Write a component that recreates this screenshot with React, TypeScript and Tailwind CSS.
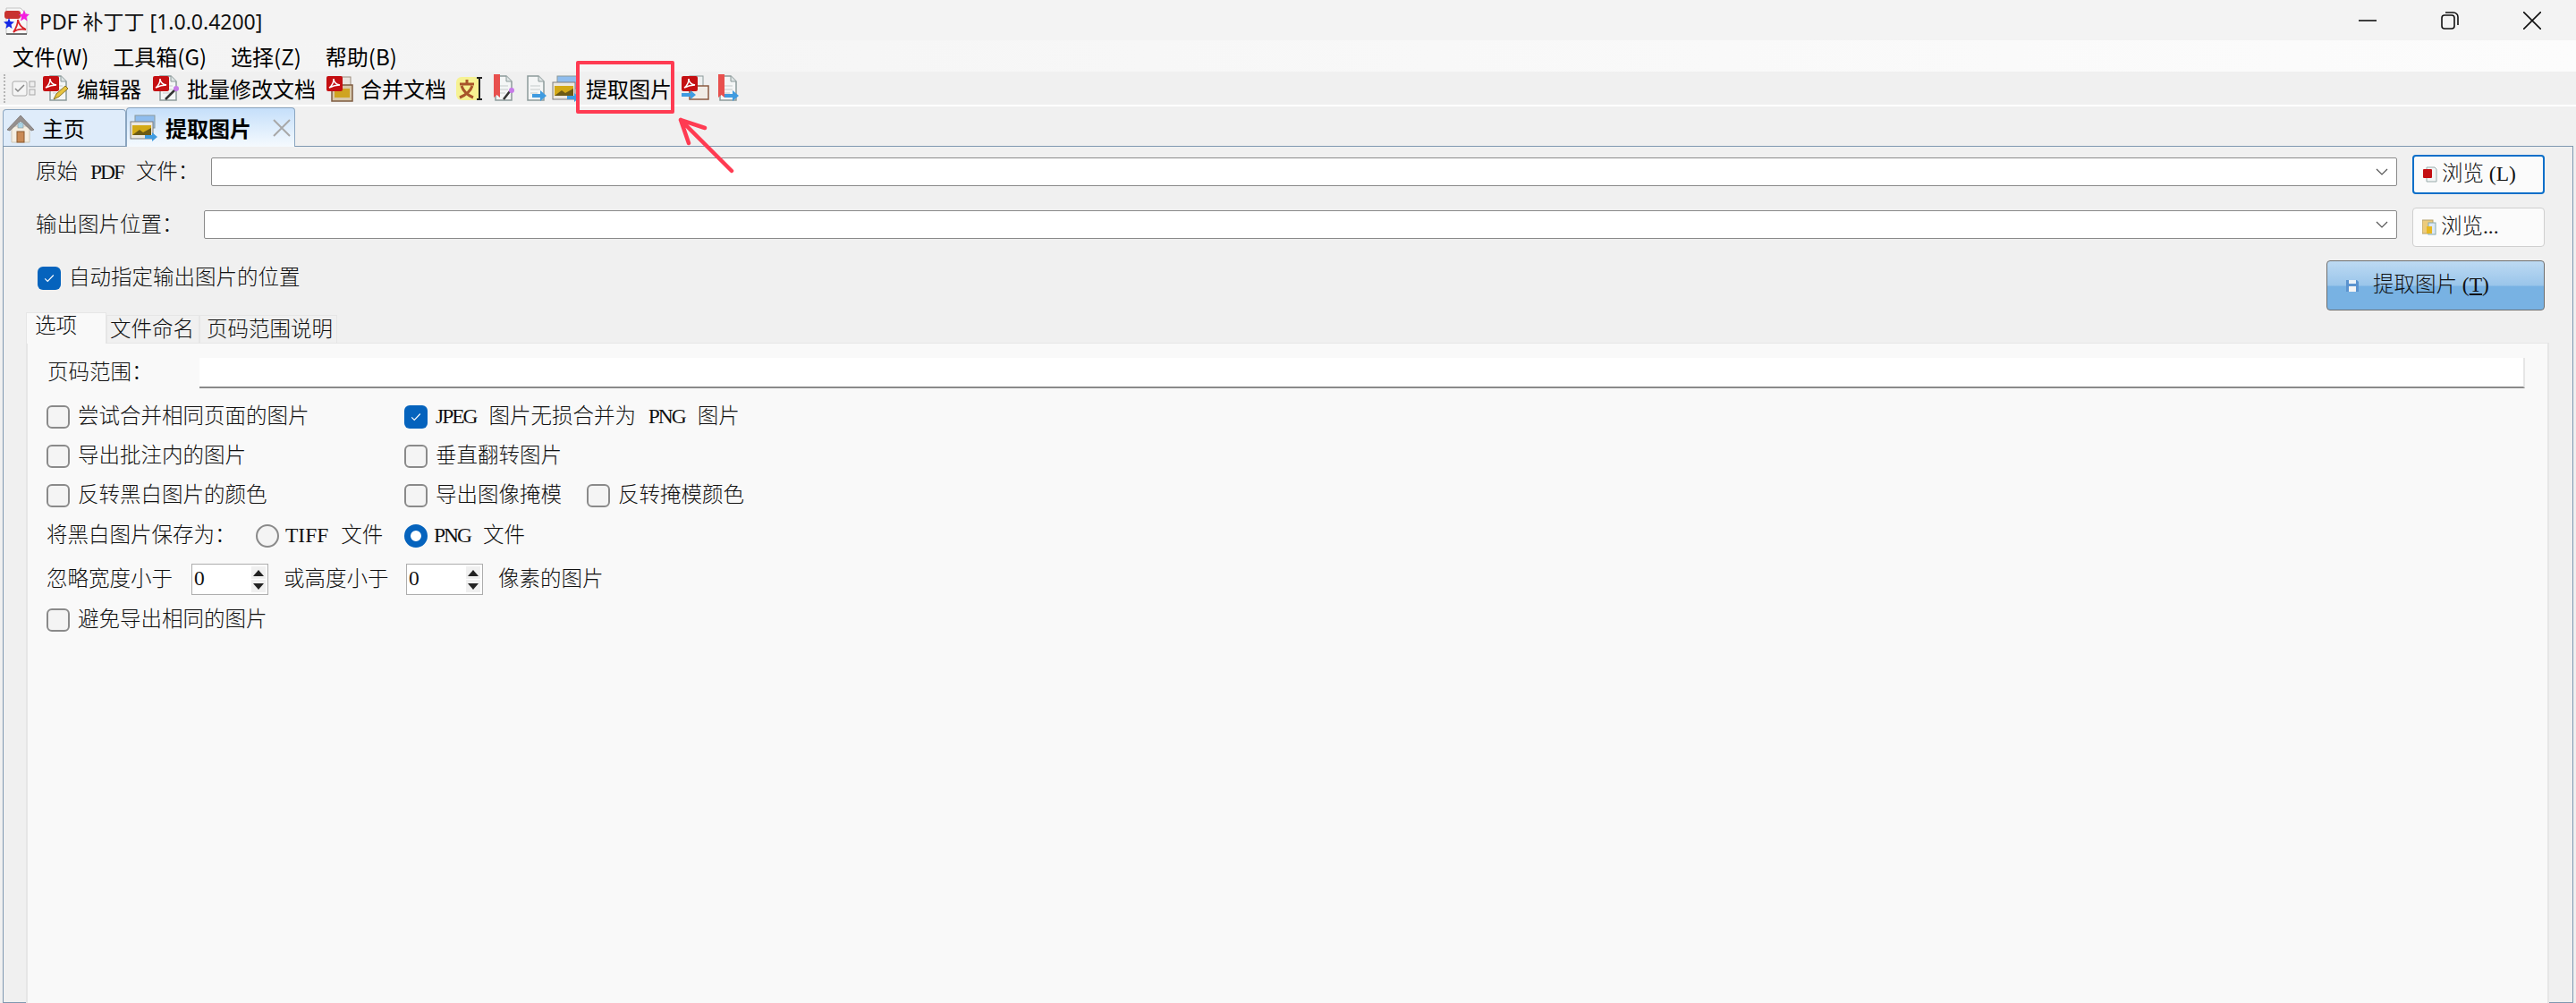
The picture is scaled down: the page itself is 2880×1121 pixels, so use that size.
import type { ReactNode } from "react";

const serif = "font-['Liberation_Serif','Noto_Sans_CJK_SC',serif] font-light [word-spacing:8px]";

function Latin({ children }: { children: ReactNode }) {
  return <span className="tracking-[-2px]">{children}</span>;
}

function DocBase({ children }: { children?: ReactNode }) {
  return (
    <>
      <path d="M9 3h12l6 6v21H9z" fill="#f4f6f6" stroke="#8c9a9a" strokeWidth="1.5" />
      <path d="M21 3v6h6" fill="#dfe5e5" stroke="#8c9a9a" strokeWidth="1" />
      <path d="M12 14h11M12 18h11M12 22h8" stroke="#c5cccc" strokeWidth="1" />
      {children}
    </>
  );
}

function AcrobatBadge() {
  return (
    <>
      <rect x="1" y="3" width="18" height="17" rx="2" fill="#c40f12" />
      <path d="M4 16c3-2 5-6 5-10 0 4 2 6 7 7-5 0-8 1-12 3z" fill="none" stroke="#fff" strokeWidth="1.5" />
    </>
  );
}

function Arrow() {
  return <path d="M14 26h9v-4l7 6-7 6v-4h-9z" transform="translate(0 -3)" fill="#3f9be0" />;
}

function ToolIcon({ kind }: { kind: string }) {
  return (
    <svg viewBox="0 0 32 34" className="w-[32px] h-[34px] shrink-0">
      {kind === "edit" && (
        <DocBase>
          <AcrobatBadge />
          <path d="M13 29l3-6 10-9 3 3-10 9z" fill="#e8c440" stroke="#8d7420" strokeWidth="1" />
        </DocBase>
      )}
      {kind === "batch" && (
        <DocBase>
          <AcrobatBadge />
          <path d="M15 29l11-11" stroke="#333" strokeWidth="2.5" />
          <circle cx="27" cy="17" r="3" fill="#c77be8" />
        </DocBase>
      )}
      {kind === "merge" && (
        <>
          <rect x="11" y="4" width="17" height="15" fill="#e9e5df" stroke="#9a8a7a" />
          <rect x="7" y="13" width="23" height="18" fill="#d8c8a8" stroke="#7d5b40" strokeWidth="1.5" />
          <rect x="10" y="17" width="17" height="10" fill="#cfa420" />
          <AcrobatBadge />
        </>
      )}
      {kind === "text" && (
        <>
          <rect x="1" y="4" width="27" height="26" rx="6" fill="#f7f27a" opacity="0.8" />
          <path d="M5 12h16M13 7v5M7 14c2 6 6 10 13 13M19 14c-2 6-7 10-14 13" fill="none" stroke="#a8552a" strokeWidth="3" />
          <path d="M24 5h6M27 5v24M24 29h6" fill="none" stroke="#222" strokeWidth="2" />
        </>
      )}
      {kind === "mark" && (
        <DocBase>
          <path d="M7 1h7v26l-3.500-3-3.500 3z" fill="#e8504e" />
          <path d="M18 29l7-9" stroke="#333" strokeWidth="2.500" />
          <circle cx="27" cy="19" r="3" fill="#c77be8" />
        </DocBase>
      )}
      {kind === "docout" && (
        <DocBase>
          <Arrow />
        </DocBase>
      )}
      {kind === "image" && <ImageGlyph />}
      {kind === "pdfimg" && (
        <>
          <rect x="10" y="3" width="15" height="18" fill="#eef1f1" stroke="#8c9a9a" />
          <rect x="10" y="14" width="21" height="15" fill="#f1ece6" stroke="#8a5a40" strokeWidth="1.500" />
          <AcrobatBadge />
          <path d="M1 22h10v-3l6 5-6 5v-3H1z" fill="#3f9be0" />
        </>
      )}
      {kind === "markout" && (
        <DocBase>
          <path d="M7 1h7v26l-3.500-3-3.500 3z" fill="#e8504e" />
          <Arrow />
        </DocBase>
      )}
    </svg>
  );
}

function ImageGlyph() {
  return (
    <>
      <rect x="6" y="3" width="22" height="14" fill="#8fbdee" stroke="#8c9a9a" />
      <rect x="1" y="10" width="25" height="19" fill="#ece8e0" stroke="#7c7c7c" />
      <rect x="3" y="14" width="21" height="11" fill="#d3a916" />
      <path d="M3 25l8-6 4 3 9-5v8z" fill="#6c5a14" />
      <path d="M17 25h8v-3l6 5-6 5v-3h-8z" fill="#3f9be0" />
    </>
  );
}

function AppIcon() {
  return (
    <svg viewBox="0 0 34 34" className="w-[34px] h-[34px] shrink-0">
      <path d="M4 2h16l7 7v22H4z" fill="#f7f7f7" stroke="#c4c4c4" />
      <path d="M4 31h23" stroke="#222" strokeWidth="1.200" />
      <rect x="2" y="5" width="18" height="9" rx="3" fill="#c8322f" />
      <path d="M17 15c0 6-3 11-5 14 3-3 7-4 14-3-5-2-8-6-9-11z" fill="none" stroke="#d8242a" strokeWidth="1.800" />
      <path d="M24 4l1.500 4.500 4.500.5-3.500 3 1 4.500-3.500-2.500-4 2.500 1-4.500L18 9l4.500-.5z" fill="#f41de0" />
      <path d="M7 13l1.500 4 4.500.5-3.500 3 1 4.500-3.500-2.500L3.500 25l1-4.500L1 17.500l4.500-.5z" fill="#1427e6" />
    </svg>
  );
}

function HomeIcon() {
  return (
    <svg viewBox="0 0 32 34" className="w-[32px] h-[34px] shrink-0">
      <path d="M6 15h20v18H6z" fill="#f5efe3" stroke="#cfc6b5" />
      <path d="M1 19L16 3l15 16-3 1L16 9 4 20z" fill="#96908e" stroke="#7a7471" strokeWidth="0.800" />
      <rect x="13" y="11" width="6" height="6" fill="#a9d4e6" stroke="#8f8f8f" strokeWidth="0.600" />
      <rect x="12" y="21" width="8" height="12" fill="#c98a55" stroke="#8a5a30" />
    </svg>
  );
}

function Check() {
  return (
    <span className="w-[26px] h-[26px] rounded-[6px] bg-[#0563bd] flex items-center justify-center shrink-0">
      <svg viewBox="0 0 16 16" className="w-[14px] h-[14px]">
        <path d="M2.500 8.500l3.500 3.500 7.500-8" fill="none" stroke="#fff" strokeWidth="1.300" />
      </svg>
    </span>
  );
}

function Box() {
  return <span className="w-[26px] h-[26px] rounded-[6px] bg-[#f4f4f4] border-2 border-[#8a8a8a] shrink-0" />;
}

function CheckItem({ label, checked, className }: { label: ReactNode; checked?: boolean; className?: string }) {
  return (
    <div className={`flex items-center gap-[9px] ${className ?? ""}`}>
      {checked ? <Check /> : <Box />}
      <span>{label}</span>
    </div>
  );
}

function Spinner() {
  return (
    <div className="w-[86px] h-[35px] bg-white border border-[#adadad] flex justify-between shrink-0">
      <span className="pl-[2px] leading-[30px]">0</span>
      <div className="w-[16px] mr-[2px] mt-[2px] flex flex-col gap-[1px]">
        <span className="h-[14px] bg-[#f0f0f0] flex items-center justify-center">
          <span className="w-0 h-0 border-x-[6px] border-x-transparent border-b-[7px] border-b-[#222]" />
        </span>
        <span className="h-[14px] bg-[#f0f0f0] flex items-center justify-center">
          <span className="w-0 h-0 border-x-[6px] border-x-transparent border-t-[7px] border-t-[#222]" />
        </span>
      </div>
    </div>
  );
}

function PathCombo({ label, labelWidth, browse, focused, icon, className }: {
  label: ReactNode;
  labelWidth: string;
  browse: string;
  focused?: boolean;
  icon: ReactNode;
  className?: string;
}) {
  return (
    <div className={`flex items-center ${className ?? ""}`}>
      <span className={`${labelWidth} pl-[36px] pt-[2px] shrink-0`}>{label}</span>
      <div className="flex-1 h-[32px] bg-white border border-[#8a8a8a] rounded-[2px] flex items-center justify-end pr-[9px]">
        <svg viewBox="0 0 14 8" className="w-[14px] h-[8px]">
          <path d="M1 1l6 6 6-6" fill="none" stroke="#555" strokeWidth="1.200" />
        </svg>
      </div>
      <div className={`ml-[17px] mr-[31px] mt-[5px] w-[148px] h-[44px] bg-[#fbfbfb] rounded-[4px] border flex items-center pl-[10px] gap-[5px] [word-spacing:0px] ${focused ? "border-2 border-[#0b6fc9]" : "border-[#cfcfcf]"}`}>
        {icon}
        <span>{browse}</span>
      </div>
    </div>
  );
}

export default function App() {
  return (
    <div className="relative w-[2880px] h-[1121px] overflow-hidden bg-[#f0f0f0] text-black font-['Noto_Sans_CJK_SC','Noto_Sans',sans-serif] text-[24px]">
      {/* title bar */}
      <div className="h-[45px] bg-[#f3f3f3] flex items-center pl-[3px] pt-[3px]">
        <AppIcon />
        <span className="ml-[7px] text-[23px] font-['Noto_Sans','Noto_Sans_CJK_SC',sans-serif] text-[#111]">PDF 补丁丁 [1.0.0.4200]</span>
        <div className="ml-auto flex items-center pr-[39px] gap-[72px] -mt-[3px]">
          <svg viewBox="0 0 20 20" className="w-[20px] h-[20px]"><path d="M0 10h20" stroke="#111" strokeWidth="1.600" /></svg>
          <svg viewBox="0 0 20 20" className="w-[20px] h-[20px]">
            <rect x="1" y="4" width="14" height="15" rx="3" fill="none" stroke="#111" strokeWidth="1.600" />
            <path d="M5 1h9a5 5 0 0 1 5 5v9" fill="none" stroke="#111" strokeWidth="1.600" />
          </svg>
          <svg viewBox="0 0 20 20" className="w-[20px] h-[20px]"><path d="M0 0l20 20M20 0L0 20" stroke="#111" strokeWidth="1.600" /></svg>
        </div>
      </div>

      {/* menu bar */}
      <div className="h-[35px] bg-gradient-to-r from-[#f3f3f3] to-[#fcfcfc] flex items-center pl-[14px] gap-[27px]">
        {["文件(W)", "工具箱(G)", "选择(Z)", "帮助(B)"].map((m) => (
          <span key={m}>{m}</span>
        ))}
      </div>

      {/* toolbar */}
      <div className="h-[39px] bg-[#f0f0f0] border-b-2 border-white flex items-center pl-[4px]">
        <span className="w-[2px] h-[32px] border-l-2 border-dotted border-[#b5b5b5] shrink-0" />
        <svg viewBox="0 0 28 20" className="ml-[7px] w-[28px] h-[20px] shrink-0">
          <rect x="1" y="2" width="16" height="16" rx="2" fill="#f5f5f5" stroke="#aaa" />
          <path d="M4 10l3 3 7-7" fill="none" stroke="#888" strokeWidth="1.500" />
          <rect x="20" y="2" width="6" height="6" fill="#eee" stroke="#aaa" />
          <rect x="20" y="11" width="6" height="6" fill="#eee" stroke="#aaa" />
        </svg>
        <div className="ml-[6px] flex items-center gap-[7px]"><ToolIcon kind="edit" /><span>编辑器</span></div>
        <div className="ml-[12px] flex items-center gap-[7px]"><ToolIcon kind="batch" /><span>批量修改文档</span></div>
        <div className="ml-[11px] flex items-center gap-[7px]"><ToolIcon kind="merge" /><span>合并文档</span></div>
        <div className="ml-[10px] flex items-center gap-[4px]">
          <ToolIcon kind="text" />
          <ToolIcon kind="mark" />
          <ToolIcon kind="docout" />
          <ToolIcon kind="image" />
        </div>
        <span className="ml-[6px]">提取图片</span>
        <div className="ml-[10px] flex items-center gap-[3px]">
          <ToolIcon kind="pdfimg" />
          <ToolIcon kind="markout" />
        </div>
      </div>

      {/* document tabs */}
      <div className="h-[44px] flex items-end pl-[3px]">
        <div className="w-[138px] h-[41px] rounded-t-[4px] border border-b-0 border-[#8aa5c0] bg-[#dfecfa] flex items-center pl-[3px] gap-[8px]">
          <HomeIcon />
          <span>主页</span>
        </div>
        <div className="relative z-10 -mb-px w-[189px] h-[44px] rounded-t-[4px] border border-b-0 border-[#8aa5c0] bg-gradient-to-b from-[#c5dffa] to-[#f5fafe] flex items-center pl-[3px] gap-[8px]">
          <svg viewBox="0 0 32 34" className="w-[32px] h-[34px] shrink-0"><ImageGlyph /></svg>
          <span className="font-bold">提取图片</span>
          <svg viewBox="0 0 20 20" className="ml-auto mr-[4px] w-[20px] h-[20px]"><path d="M1 1l18 18M19 1L1 19" stroke="#a8a8a8" strokeWidth="2" /></svg>
        </div>
      </div>

      {/* main panel */}
      <div className={`h-[958px] mx-[3px] border border-[#7f98b0] text-[23.5px] ${serif} text-[#111]`}>
        <PathCombo
          className="h-[56px]"
          label={<>原始 <Latin>PDF</Latin> 文件：</>}
          labelWidth="w-[232px]"
          browse="浏览 (L)"
          focused
          icon={
            <svg viewBox="0 0 16 18" className="w-[16px] h-[18px] shrink-0">
              <path d="M4 1h9l2 2v14H4z" fill="#f2f5f5" stroke="#9aa" />
              <rect x="0" y="3" width="10" height="10" rx="1" fill="#c40f12" />
            </svg>
          }
        />
        <PathCombo
          className="h-[62px]"
          label="输出图片位置："
          labelWidth="w-[224px]"
          browse="浏览..."
          icon={
            <svg viewBox="0 0 16 18" className="w-[16px] h-[18px] shrink-0">
              <rect x="0" y="1" width="12" height="15" fill="#eccb7c" stroke="#b6a16a" />
              <rect x="7" y="4" width="8" height="13" fill="#dbe8f5" stroke="#8aa" />
              <rect x="5" y="8" width="6" height="8" fill="#e8b820" />
            </svg>
          }
        />
        <div className="flex items-start h-[67px] pl-[38px] pr-[31px]">
          <CheckItem className="mt-[16px] h-[26px]" label="自动指定输出图片的位置" checked />
          <div className="ml-auto mt-[9px] w-[244px] h-[56px] rounded-[4px] border border-[#6e6e6e] bg-[linear-gradient(#bddaf3_0%,#9ac5ea_50%,#78b2e3_52%,#78b2e3_100%)] flex items-center pl-[21px] gap-[16px] [word-spacing:0px]">
            <svg viewBox="0 0 14 14" className="w-[14px] h-[14px] shrink-0">
              <path d="M0 1h12l2 2v11H0z" fill="#5b93cf" />
              <rect x="3" y="1" width="8" height="4" fill="#e9f1f8" />
              <rect x="3" y="8" width="8" height="6" fill="#f4f4f4" />
            </svg>
            <span>提取图片 (<span className="underline">T</span>)</span>
          </div>
        </div>

        {/* option tabs */}
        <div className="relative z-10 h-[35px] -mb-px flex items-end pl-[25px]">
          <div className="w-[90px] h-[35px] bg-[#f9f9f9] border border-b-0 border-[#e6e6e6] pl-[9px] leading-[28px]">选项</div>
          <div className="w-[104px] h-[32px] bg-[#f0f0f0] border border-[#e6e6e6] pl-[3px] leading-[30px]">文件命名</div>
          <div className="w-[154px] h-[32px] bg-[#f0f0f0] border border-[#e6e6e6] pl-[7px] leading-[30px]">页码范围说明</div>
        </div>
        <div className="ml-[25px] mr-[26px] h-[750px] bg-[#f9f9f9] border-x-2 border-t border-[#e6e6e6] pl-[21px] pr-[25px] pt-[16px]">
          <div className="flex items-center h-[34px]">
            <span className="w-[171px] shrink-0 pl-[1px]">页码范围：</span>
            <div className="flex-1 h-[34px] bg-white border-b-2 border-r-2 border-b-[#8a8a8a] border-r-[#e6e6e6]" />
          </div>
          <div className="flex mt-[19px] h-[26px]">
            <CheckItem className="w-[400px]" label="尝试合并相同页面的图片" />
            <CheckItem label={<><Latin>JPEG</Latin> 图片无损合并为 <Latin>PNG</Latin> 图片</>} checked />
          </div>
          <div className="flex mt-[18px] h-[26px]">
            <CheckItem className="w-[400px]" label="导出批注内的图片" />
            <CheckItem label="垂直翻转图片" />
          </div>
          <div className="flex mt-[18px] h-[26px]">
            <CheckItem className="w-[400px]" label="反转黑白图片的颜色" />
            <CheckItem className="w-[204px]" label="导出图像掩模" />
            <CheckItem label="反转掩模颜色" />
          </div>
          <div className="flex items-center mt-[19px] h-[26px]">
            <span className="w-[234px] shrink-0">将黑白图片保存为：</span>
            <div className="w-[166px] flex items-center gap-[7px] shrink-0">
              <span className="w-[26px] h-[26px] rounded-full bg-[#f4f4f4] border-2 border-[#8a8a8a]" />
              <span>TIFF 文件</span>
            </div>
            <div className="flex items-center gap-[7px]">
              <span className="w-[26px] h-[26px] rounded-full bg-white border-[7px] border-[#0563bd]" />
              <span><Latin>PNG</Latin> 文件</span>
            </div>
          </div>
          <div className="flex items-center mt-[18px] h-[35px]">
            <span className="w-[162px] shrink-0">忽略宽度小于</span>
            <Spinner />
            <span className="ml-[17px] w-[137px] shrink-0">或高度小于</span>
            <Spinner />
            <span className="ml-[17px]">像素的图片</span>
          </div>
          <CheckItem className="mt-[15px] h-[26px]" label="避免导出相同的图片" />
        </div>
      </div>

      {/* red annotation drawn over the toolbar */}
      <div className="absolute left-[644px] top-[68px] w-[110px] h-[59px] rounded-[2px] border-[4px] border-[#ff3b52]" />
      <svg className="absolute left-[750px] top-[125px] w-[80px] h-[75px]" viewBox="0 0 80 75">
        <path d="M68 66L11 9M11 9l27 9M11 9l9 26" fill="none" stroke="#ff3b52" strokeWidth="4.500" strokeLinecap="round" />
      </svg>
    </div>
  );
}
